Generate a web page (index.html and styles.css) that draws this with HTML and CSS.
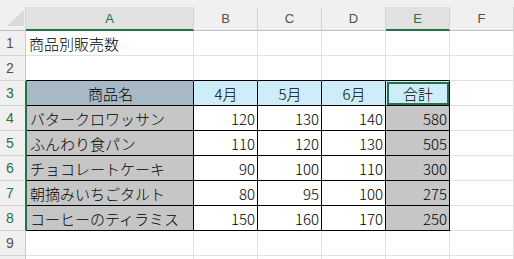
FILE: index.html
```html
<!DOCTYPE html>
<html lang="ja">
<head>
<meta charset="utf-8">
<link rel="stylesheet" href="styles.css">
</head>
<body>
<div class="top"></div>
<div class="sheet">
  <div class="corner"><svg width="25" height="23" viewBox="0 0 25 23"><polygon points="7,19 24,3 24,19" fill="#dadada"/></svg></div>
  <div class="ch sel">A</div><div class="ch">B</div><div class="ch">C</div><div class="ch">D</div><div class="ch sel">E</div><div class="ch">F</div>

  <div class="rh">1</div><div class="c">商品別販売数</div><div class="c"></div><div class="c"></div><div class="c"></div><div class="c"></div><div class="c"></div>

  <div class="rh">2</div><div class="c tt"></div><div class="c tt"></div><div class="c tt"></div><div class="c tt"></div><div class="c tt"></div><div class="c"></div>

  <div class="rh sel">3</div><div class="c t a hdr-a">商品名</div><div class="c t hdr">4月</div><div class="c t hdr">5月</div><div class="c t hdr">6月</div><div class="c t hdr active">合計</div><div class="c"></div>

  <div class="rh sel">4</div><div class="c t a g">バタークロワッサン</div><div class="c t num">120</div><div class="c t num">130</div><div class="c t num">140</div><div class="c t num g">580</div><div class="c"></div>

  <div class="rh sel">5</div><div class="c t a g">ふんわり食パン</div><div class="c t num">110</div><div class="c t num">120</div><div class="c t num">130</div><div class="c t num g">505</div><div class="c"></div>

  <div class="rh sel">6</div><div class="c t a g">チョコレートケーキ</div><div class="c t num">90</div><div class="c t num">100</div><div class="c t num">110</div><div class="c t num g">300</div><div class="c"></div>

  <div class="rh sel">7</div><div class="c t a g">朝摘みいちごタルト</div><div class="c t num">80</div><div class="c t num">95</div><div class="c t num">100</div><div class="c t num g">275</div><div class="c"></div>

  <div class="rh sel">8</div><div class="c t a g">コーヒーのティラミス</div><div class="c t num">150</div><div class="c t num">160</div><div class="c t num">170</div><div class="c t num g">250</div><div class="c"></div>

  <div class="rh">9</div><div class="c"></div><div class="c"></div><div class="c"></div><div class="c"></div><div class="c"></div><div class="c"></div>

  <div class="rh"></div><div class="c"></div><div class="c"></div><div class="c"></div><div class="c"></div><div class="c"></div><div class="c"></div>
</div>
</body>
</html>
```

FILE: styles.css
```css
html, body {
  margin: 0;
  background: #fff;
  overflow: hidden;
  font-family: "Liberation Sans", "Noto Sans CJK JP", sans-serif;
}
.top {
  height: 7px;
  background: #f0f0f0;
}
.sheet {
  display: grid;
  grid-template-columns: 26px 168px repeat(5, 64px);
  grid-template-rows: 24px repeat(10, 25px);
}
.sheet > div {
  box-sizing: border-box;
  display: flex;
  align-items: center;
  overflow: hidden;
  white-space: nowrap;
}
.corner {
  background: #f0f0f0;
  border-right: 1px solid #d4d4d4;
  border-bottom: 1px solid #bdbdbd;
}
.ch {
  background: #f0f0f0;
  justify-content: center;
  border-right: 1px solid #d4d4d4;
  border-bottom: 1px solid #bdbdbd;
  font-size: 13px;
  color: #505050;
}
.ch.sel {
  background: #e1e1e1;
  color: #217346;
  border-bottom: 2px solid #217346;
}
.rh {
  background: #f0f0f0;
  justify-content: center;
  padding-right: 5px;
  border-right: 1px solid #c8c8c8;
  border-bottom: 1px solid #d4d4d4;
  font-size: 14px;
  color: #505050;
}
.rh.sel {
  color: #217346;
  border-right-color: #217346;
}
.c {
  border-right: 1px solid #e0e0e0;
  border-bottom: 1px solid #e0e0e0;
  font-family: "Noto Sans CJK JP", sans-serif;
  font-size: 15px;
  font-weight: 300;
  color: #000;
  padding: 1px 2px 0 3px;
}
.c.tt {
  border-bottom-color: #000;
}
.c.t {
  border-right-color: #000;
  border-bottom-color: #000;
}
.c.a {
  border-left: 1px solid #217346;
}
.hdr-a {
  background: #a6b9c5;
  justify-content: center;
}
.hdr {
  background: #cdedfb;
  justify-content: center;
}
.g {
  background: #c6c6c6;
}
.num {
  justify-content: flex-end;
  font-size: 15px;
}
.active {
  outline: 2px solid #217346;
  outline-offset: -3px;
}
```
